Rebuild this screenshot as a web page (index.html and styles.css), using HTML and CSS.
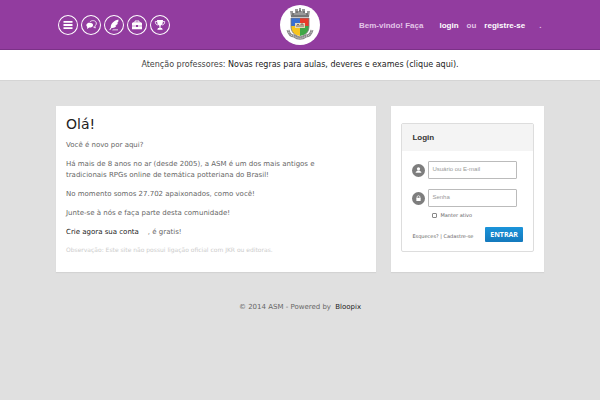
FILE: index.html
```html
<!DOCTYPE html>
<html lang="pt-BR">
<head>
    <meta charset="UTF-8">
    <title>ASM</title>
    <link rel="stylesheet" href="styles.css">
</head>
<body>
    <header class="topbar">
        <div class="container topbar-inner">
            <nav class="menu">
                <a href="#" class="menu-item" aria-label="Menu">
                    <svg viewBox="0 0 20 20"><path d="M5.500 6h9v1.800h-9zM5.500 9.100h9v1.800h-9zM5.500 12.200h9V14h-9z"/></svg>
                </a>
                <a href="#" class="menu-item" aria-label="Chat">
                    <svg viewBox="0 0 20 20">
                        <path d="M9 7C10 5 15 5 15.300 8c.2 1.600-.7 2.500-1.500 3l.5 2-2-1" fill="none" stroke="#fff" stroke-width=".8"/>
                        <path d="M8.500 7.800c2.500 0 3.800 1.100 3.500 2.700-.3 1.500-2 2.200-3.800 2l-2.200 1.500.3-2C4.500 10.500 5.500 7.800 8.500 7.800z"/>
                    </svg>
                </a>
                <a href="#" class="menu-item" aria-label="Escrever">
                    <svg viewBox="0 0 20 20">
                        <path d="M14.500 4.500C10 5.500 6.500 8.500 6.800 12.500l-1.500 2.300.9.200 1.400-2c3 .2 4.200-1.200 4.800-2.500l-1.500.1 2.300-1.200.8-1.900-1.400.2 1.700-1z"/>
                        <path d="M9 14.500h5v.7H8z"/>
                    </svg>
                </a>
                <a href="#" class="menu-item" aria-label="Trabalho">
                    <svg viewBox="0 0 20 20">
                        <path d="M8 7.500V6h4v1.500" fill="none" stroke="#fff"/>
                        <path d="M6 7.300h8l1 1v2.400h-4V10H9v.7H5V8.300zM5 11.200h4v.8h2v-.8h4v3H5z"/>
                    </svg>
                </a>
                <a href="#" class="menu-item" aria-label="Troféu">
                    <svg viewBox="0 0 20 20">
                        <path d="M7 6.500H5.300c0 2.200.8 3.300 2.700 3.500M13 6.500h1.700c0 2.200-.8 3.300-2.700 3.500" fill="none" stroke="#fff" stroke-width=".8"/>
                        <path d="M7 5h6c0 3.500-.8 5-2.400 5.800V13H12l.7 1.700H7.300L8 13h1.400v-2.200C7.800 10 7 8.500 7 5z"/>
                    </svg>
                </a>
            </nav>
            <a href="#" class="logo" aria-label="ASM">
                <svg viewBox="0 0 40 40">
                    <circle cx="20" cy="20" r="20" fill="#fff"/>
                    <path d="M11 12l-1-6h3v2h2V4h3v2h1V3h2v3h1V4h3v4h2V6h3l-1 6z" fill="#999"/>
                    <path d="M11 11h18M12 9h2M16 7h2M19 6h2M23 7h2M26 9h2" stroke="#555"/>
                    <path d="M11 13h9v8h-9z" fill="#386fd1"/>
                    <path d="M20 13h9v8h-9z" fill="#e83a2b"/>
                    <path d="M11 21h9v10c-5-1-9-3-9-10z" fill="#f7c51d"/>
                    <path d="M20 21h9c0 7-4 9-9 10z" fill="#3ea746"/>
                    <path d="M11 13h18v8c0 6-3 9-9 11-6-2-9-5-9-11z" fill="none" stroke="#777" stroke-width=".8"/>
                    <path d="M15 18h10v5H15z" fill="#e0d9bd"/>
                    <path d="M17 22v-2l1-1 1 1v2M21 22v-3h2v3" fill="none" stroke="#704c3c" stroke-width=".8"/>
                    <path d="M8 25c1 4 3 6 6 6 4 3 8 3 12 0 3 0 5-2 6-6" fill="none" stroke="#888" stroke-width="3"/>
                    <path d="M8 25c1 4 3 6 6 6 4 3 8 3 12 0 3 0 5-2 6-6" fill="none" stroke="#ddd" stroke-dasharray="1 1"/>
                </svg>
            </a>
            <div class="welcome">
                <span>Bem-vindo! Faça</span>
                <a href="#" class="welcome-login">login</a>
                <span>ou</span>
                <a href="#">registre-se</a>
                <span class="welcome-end">.</span>
            </div>
        </div>
    </header>

    <div class="notice">
        Atenção professores: <a href="#">Novas regras para aulas, deveres e exames (clique aqui).</a>
    </div>

    <main class="container content">
        <section class="card intro">
            <h1>Olá!</h1>
            <p>Você é novo por aqui?</p>
            <p>Há mais de 8 anos no ar (desde 2005), a ASM é um dos mais antigos e tradicionais RPGs online de temática potteriana do Brasil!</p>
            <p>No momento somos 27.702 apaixonados, como você!</p>
            <p>Junte-se à nós e faça parte desta comunidade!</p>
            <p><a href="#" class="signup">Crie agora sua conta</a>, é gratis!</p>
            <p class="note">Observação: Este site não possui ligação oficial com JKR ou editoras.</p>
        </section>

        <aside class="card side">
            <form class="login">
                <h2>Login</h2>
                <div class="login-body">
                    <div class="field">
                        <label for="user" aria-label="Usuário ou E-mail">
                            <svg viewBox="0 0 14 14"><circle cx="7" cy="7" r="7" fill="#7d7d7d"/><circle cx="7" cy="5.200" r="1.700" fill="#fff"/><path d="M4 9.500V8.500L6 7h2l2 1.500v1z" fill="#fff"/></svg>
                        </label>
                        <input type="text" id="user" placeholder="Usuário ou E-mail">
                    </div>
                    <div class="field">
                        <label for="pass" aria-label="Senha">
                            <svg viewBox="0 0 14 14"><circle cx="7" cy="7" r="7" fill="#7d7d7d"/><path d="M5.500 7V5.500a1.500 1.500 0 0 1 3 0V7" fill="none" stroke="#fff" stroke-width=".8"/><path d="M4.700 6.300h4.600v3.400H4.700z" fill="#fff"/></svg>
                        </label>
                        <input type="password" id="pass" placeholder="Senha">
                    </div>
                    <div class="remember">
                        <input type="checkbox" id="remember">
                        <label for="remember">Manter ativo</label>
                    </div>
                    <div class="actions">
                        <div class="links"><a href="#">Esqueces?</a> | <a href="#">Cadastre-se</a></div>
                        <button type="submit">ENTRAR</button>
                    </div>
                </div>
            </form>
        </aside>
    </main>

    <footer class="footer">© 2014 ASM - Powered by <a href="#">Bloopix</a></footer>
</body>
</html>
```

FILE: styles.css
```css
* {
    box-sizing: border-box;
}
body {
    margin: 0;
    background: #e0e0e0;
    color: #666;
    font-family: "DejaVu Sans", sans-serif;
    font-size: 7px;
    line-height: 11px;
}
a {
    color: #222;
    text-decoration: none;
}
svg {
    display: block;
    width: 100%;
}
.container {
    max-width: 1200px;
    margin: 0 auto;
    padding: 0 56px;
}
.topbar {
    background: #923c9f;
    box-shadow: inset 0 -1px 0 #7b3187;
}
.topbar-inner {
    display: grid;
    grid-template-columns: 1fr 40px 1fr;
    align-items: center;
    height: 50px;
}
.menu {
    display: flex;
    gap: 3px;
    padding-left: 2px;
}
.menu-item {
    width: 20px;
    height: 20px;
    border-radius: 50%;
    box-shadow: inset 0 0 0 1px #fff;
}
.menu-item svg {
    fill: #fff;
}
.logo {
    width: 40px;
}
.welcome {
    display: flex;
    gap: 8px;
    padding-left: 39px;
    color: #e3c5e8;
    font-family: "Liberation Sans", sans-serif;
    font-size: 8px;
    font-weight: bold;
    white-space: nowrap;
}
.welcome a {
    color: #fff;
}
.welcome .welcome-login {
    padding-left: 8px;
}
.welcome-end {
    padding-left: 6px;
}
.notice {
    padding: 9px 0 10px;
    background: #fff;
    border-bottom: 1px solid #d5d5d5;
    color: #444;
    font-size: 8px;
    text-align: center;
}
.content {
    display: grid;
    grid-template-columns: minmax(0, 21fr) minmax(0, 10fr);
    gap: 15px;
    margin-top: 25px;
}
.card {
    background: #fff;
    box-shadow: 0 1px 1px #d3d3d3;
}
.intro {
    padding: 10px;
}
.intro h1 {
    margin: 0 0 7px;
    color: #222;
    font-size: 14px;
    font-weight: normal;
    line-height: 17px;
}
.intro p {
    max-width: 250px;
    margin: 0 0 8px;
}
.signup {
    margin-right: 9px;
}
.intro .note {
    margin: 0;
    color: #ccc;
    font-size: 6px;
    line-height: 8px;
}
.side {
    padding: 17px 10px 20px;
}
.login {
    border: 1px solid #ddd;
    border-radius: 2px;
}
.login h2 {
    margin: 0;
    padding: 8px 10px;
    background: #f4f4f4;
    color: #333;
    font-family: "Liberation Sans", sans-serif;
    font-size: 8px;
    line-height: 11px;
}
.login-body {
    padding: 10px 10px 9px;
}
.field {
    display: flex;
    align-items: center;
    gap: 3px;
    margin-bottom: 10px;
    padding-right: 6px;
}
.field label {
    flex: none;
    width: 13px;
}
.field input {
    flex: 1;
    min-width: 0;
    height: 18px;
    padding: 0 3px 3px;
    border: 1px solid #bbb;
    border-radius: 1px;
    font-family: "Liberation Sans", sans-serif;
    font-size: 6px;
}
.field input::placeholder {
    color: #999;
}
.remember {
    display: flex;
    align-items: center;
    gap: 3px;
    margin-top: -7px;
    padding-left: 20px;
    font-size: 5px;
}
.remember input {
    appearance: none;
    width: 5px;
    height: 5px;
    margin: 0;
    border: 1px solid #888;
    border-radius: 1px;
}
.remember input:checked {
    background: #666;
}
.actions {
    display: flex;
    align-items: center;
    justify-content: space-between;
    margin-top: 6px;
    font-size: 5px;
    white-space: nowrap;
}
.links {
    padding-top: 4px;
}
.links a {
    color: #666;
}
button {
    height: 15px;
    padding: 0 5px;
    background: linear-gradient(#1b94da, #1479bd);
    border: 0;
    border-radius: 1px;
    color: #fff;
    font-family: "Open Sans", sans-serif;
    font-size: 7px;
    font-weight: bold;
    line-height: 15px;
    cursor: pointer;
}
.footer {
    padding: 30px 0;
    text-align: center;
}
.footer a {
    margin-left: 2px;
}
```
